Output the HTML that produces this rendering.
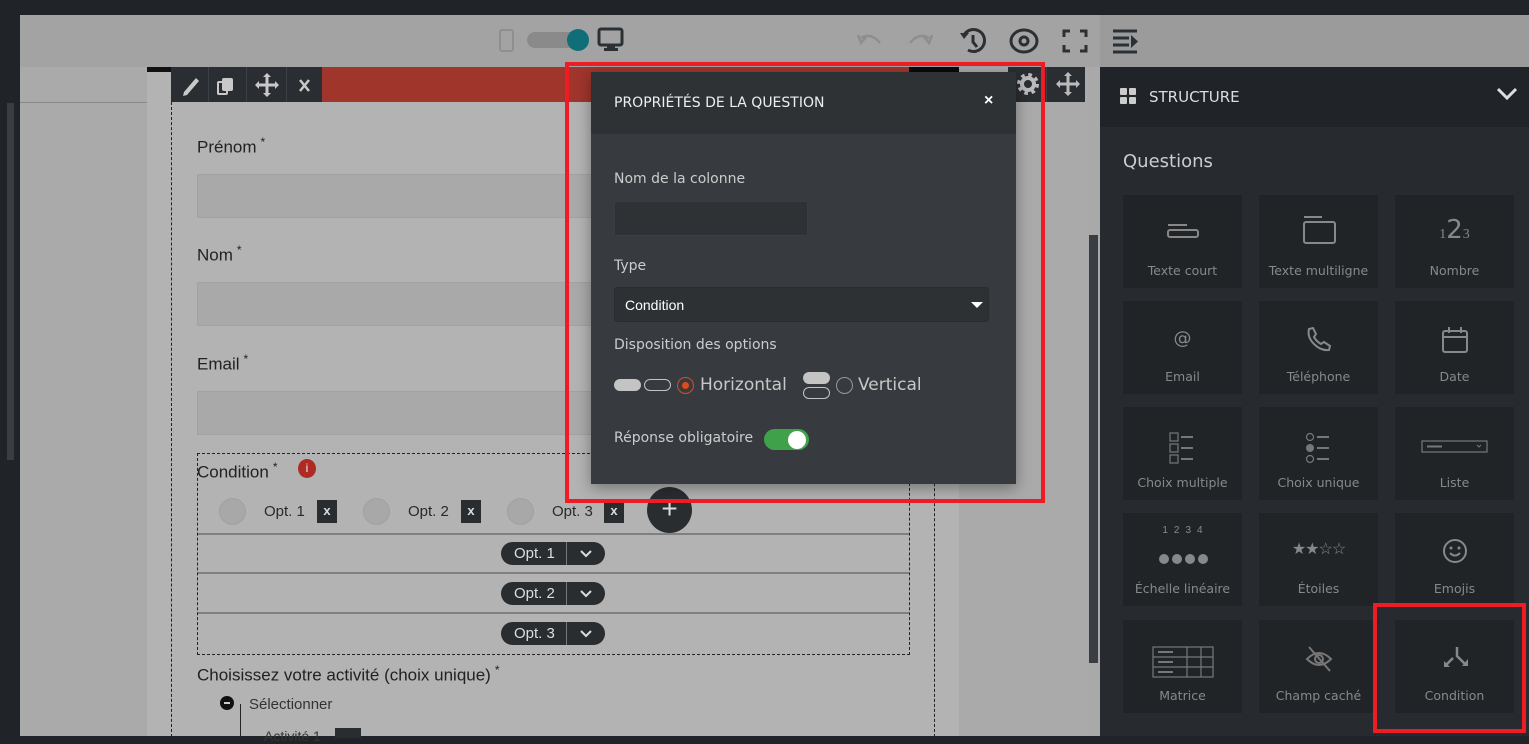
<!DOCTYPE html>
<html><head><meta charset="utf-8"><style>
*{box-sizing:border-box;margin:0;padding:0}
body{width:1529px;height:736px;overflow:hidden;background:#202428;font-family:"Liberation Sans",sans-serif;position:relative}
.a{position:absolute}
.sans{font-family:"DejaVu Sans","Liberation Sans",sans-serif}
.tile{position:absolute;width:119px;height:93px;background:#212427;color:#8a8d90;font-size:13px;text-align:center}
.tile span{position:absolute;left:0;right:0;bottom:10px;font-family:"DejaVu Sans",sans-serif;font-size:12.5px;color:#86898c}
.tile svg{position:absolute;left:50%;top:24px;transform:translateX(-50%)}
.inp{position:absolute;left:197px;width:400px;height:44px;background:#a9a9a9;border:1px solid #a2a2a2}
.lbl{position:absolute;left:197px;font-size:17px;color:#222}
.lbl sup{font-size:12px;margin-left:4px}
.pill{position:absolute;left:501px;width:104px;height:23px;background:#2a2d30;border-radius:12px;color:#ddd;font-size:15px;line-height:23px}
.circ{position:absolute;width:27px;height:27px;border-radius:50%;background:#a8a8a8;border:1px solid #a0a0a0;top:498px}
.xb{position:absolute;width:20px;height:23px;background:#2a2d30;color:#ddd;font-weight:bold;font-size:13px;text-align:center;line-height:22px;top:500px}
.ot{position:absolute;top:503px;font-size:15px;color:#2a2a2a}
</style></head><body>
<div class="a" style="left:0;top:15px;width:20px;height:721px;background:#202428"></div>
<div class="a" style="left:7px;top:103px;width:7px;height:357px;background:#3a3e42"></div>
<div class="a" style="left:20px;top:15px;width:1080px;height:52px;background:#a3a3a3"></div>
<div class="a" style="left:1100px;top:15px;width:429px;height:52px;background:#9b9b9b"></div>
<div class="a" style="left:499px;top:29px;width:15px;height:23px;border:2px solid #8f8f8f;border-radius:3px"></div>
<div class="a" style="left:527px;top:32px;width:50px;height:16px;background:#8a8a8a;border-radius:8px"></div>
<div class="a" style="left:567px;top:29px;width:22px;height:22px;background:#0f6e78;border-radius:50%"></div>
<svg class="a" style="left:597px;top:27px" width="28" height="26"><rect x="2" y="2" width="23" height="16" rx="2" fill="none" stroke="#2b3035" stroke-width="3"/><rect x="10" y="18" width="8" height="4" fill="#2b3035"/><rect x="7" y="21" width="14" height="3" fill="#2b3035"/></svg>
<svg class="a" style="left:855px;top:30px" width="30" height="20"><path d="M6 8 Q16 2 25 13" fill="none" stroke="#8e8e8e" stroke-width="2.5"/><path d="M3 5 L6 13 L11 7" fill="none" stroke="#8e8e8e" stroke-width="2.5"/></svg>
<svg class="a" style="left:905px;top:30px" width="30" height="20"><path d="M24 8 Q14 2 5 13" fill="none" stroke="#8e8e8e" stroke-width="2.5"/><path d="M27 5 L24 13 L19 7" fill="none" stroke="#8e8e8e" stroke-width="2.5"/></svg>
<svg class="a" style="left:958px;top:27px" width="30" height="28"><path d="M6 8 A11 11 0 1 1 10 23" fill="none" stroke="#2b3035" stroke-width="3"/><path d="M2 6 L6 12 L11 6" fill="#2b3035"/><path d="M15 8 L15 15 L19 20" fill="none" stroke="#2b3035" stroke-width="3"/></svg>
<svg class="a" style="left:1008px;top:28px" width="32" height="26"><ellipse cx="16" cy="13" rx="13" ry="11" fill="none" stroke="#2b3035" stroke-width="3"/><circle cx="16" cy="13" r="4" fill="none" stroke="#2b3035" stroke-width="3"/></svg>
<svg class="a" style="left:1062px;top:29px" width="26" height="24"><path d="M2 8V2H8M18 2H24V8M24 16V22H18M8 22H2V16" fill="none" stroke="#2b3035" stroke-width="3"/></svg>
<svg class="a" style="left:1111px;top:28px" width="30" height="26"><path d="M2 3H26M2 10H18M2 17H18M2 24H26" stroke="#2b3035" stroke-width="3"/><path d="M20 7 L27 13.5 L20 20Z" fill="#2b3035"/></svg>
<div class="a" style="left:20px;top:67px;width:1080px;height:669px;background:#aaaaaa"></div>
<div class="a" style="left:20px;top:102px;width:127px;height:1px;background:#888"></div>
<div class="a" style="left:147px;top:67px;width:812px;height:669px;background:#b3b3b3"></div>
<div class="a" style="left:1088px;top:67px;width:12px;height:669px;background:#a9a9a9"></div>
<div class="a" style="left:1089px;top:235px;width:9px;height:428px;background:#3a3e42"></div>
<div class="a" style="left:147px;top:67px;width:25px;height:5px;background:#111"></div>
<div class="a" style="left:171px;top:67px;width:151px;height:35px;background:#2a2d31"></div>
<svg class="a" style="left:180px;top:72px" width="140" height="26"><path d="M4 20 L16 6 L19 9 L7 23 L3 24Z" fill="#c9c9c9"/><rect x="42" y="6" width="11" height="13" rx="2" fill="#c9c9c9"/><rect x="38" y="10" width="9" height="12" rx="1" fill="none" stroke="#c9c9c9" stroke-width="2"/><path d="M87 3v20M77 13h20" stroke="#c9c9c9" stroke-width="3"/><path d="M87 1l-4 4h8zM87 25l-4-4h8zM75 13l4-4v8zM99 13l-4-4v8z" fill="#c9c9c9"/><path d="M120 8l9 11M129 8l-9 11" stroke="#c9c9c9" stroke-width="2.5"/></svg>
<div class="a" style="left:208px;top:67px;width:1px;height:35px;background:#3d4145"></div>
<div class="a" style="left:246px;top:67px;width:1px;height:35px;background:#3d4145"></div>
<div class="a" style="left:286px;top:67px;width:1px;height:35px;background:#3d4145"></div>
<div class="a" style="left:322px;top:67px;width:587px;height:35px;background:#a0352c"></div>
<div class="a" style="left:909px;top:67px;width:50px;height:5px;background:#0a0a0a"></div>
<div class="a" style="left:1008px;top:67px;width:77px;height:35px;background:#2a2d31"></div>
<div class="a" style="left:1046px;top:67px;width:1px;height:35px;background:#3d4145"></div>
<svg class="a" style="left:1015px;top:72px" width="26" height="24"><circle cx="13" cy="12" r="9" fill="none" stroke="#bbb" stroke-width="4" stroke-dasharray="3.5 3.57"/><circle cx="13" cy="12" r="6" fill="none" stroke="#bbb" stroke-width="4"/><circle cx="13" cy="12" r="2.5" fill="#2a2d31"/></svg>
<svg class="a" style="left:1055px;top:71px" width="26" height="26"><path d="M13 3v20M3 13h20" stroke="#bbb" stroke-width="3"/><path d="M13 1l-4 4h8zM13 25l-4-4h8zM1 13l4-4v8zM25 13l-4-4v8z" fill="#bbb"/></svg>
<div class="a" style="left:171px;top:102px;width:764px;height:640px;border:1px dashed #222;border-top:none"></div>
<div class="lbl" style="top:135px">Prénom<sup>*</sup></div>
<div class="inp" style="top:174px"></div>
<div class="lbl" style="top:243px">Nom<sup>*</sup></div>
<div class="inp" style="top:282px"></div>
<div class="lbl" style="top:352px">Email<sup>*</sup></div>
<div class="inp" style="top:391px"></div>
<div class="a" style="left:197px;top:453px;width:713px;height:202px;border:1px dashed #222"></div>
<div class="lbl" style="top:460px">Condition<sup>*</sup></div>
<div class="a" style="left:298px;top:459px;width:18px;height:19px;border-radius:50%;background:#b02a25;color:#eee;font-size:12px;text-align:center;line-height:19px">i</div>
<div class="circ" style="left:219px"></div><div class="ot" style="left:264px">Opt. 1</div><div class="xb" style="left:317px">x</div>
<div class="circ" style="left:363px"></div><div class="ot" style="left:408px">Opt. 2</div><div class="xb" style="left:461px">x</div>
<div class="circ" style="left:507px"></div><div class="ot" style="left:552px">Opt. 3</div><div class="xb" style="left:604px">x</div>
<div class="a" style="left:647px;top:487px;width:45px;height:46px;border-radius:50%;background:#2a2d30;color:#ddd;font-size:28px;text-align:center;line-height:44px">+</div>
<div class="a" style="left:198px;top:533px;width:711px;height:2px;background:#808080"></div>
<div class="a" style="left:198px;top:572px;width:711px;height:2px;background:#808080"></div>
<div class="a" style="left:198px;top:612px;width:711px;height:2px;background:#808080"></div>
<div class="pill" style="top:542px"><span style="margin-left:13px">Opt. 1</span><span class="a" style="left:65px;top:0;width:1px;height:23px;background:#777"></span><svg class="a" style="left:79px;top:8px" width="12" height="8"><path d="M1 1L6 6L11 1" fill="none" stroke="#ddd" stroke-width="2"/></svg></div>
<div class="pill" style="top:582px"><span style="margin-left:13px">Opt. 2</span><span class="a" style="left:65px;top:0;width:1px;height:23px;background:#777"></span><svg class="a" style="left:79px;top:8px" width="12" height="8"><path d="M1 1L6 6L11 1" fill="none" stroke="#ddd" stroke-width="2"/></svg></div>
<div class="pill" style="top:622px"><span style="margin-left:13px">Opt. 3</span><span class="a" style="left:65px;top:0;width:1px;height:23px;background:#777"></span><svg class="a" style="left:79px;top:8px" width="12" height="8"><path d="M1 1L6 6L11 1" fill="none" stroke="#ddd" stroke-width="2"/></svg></div>
<div class="lbl" style="top:663px">Choisissez votre activité (choix unique)<sup>*</sup></div>
<div class="a" style="left:220px;top:696px;width:14px;height:14px;border-radius:50%;background:#111"></div>
<div class="a" style="left:224px;top:702px;width:6px;height:2px;background:#ccc"></div>
<div class="a" style="left:240px;top:704px;width:1px;height:32px;background:#222"></div>
<div class="a" style="left:249px;top:696px;font-size:15px;color:#333">Sélectionner</div>
<div class="a" style="left:264px;top:728px;font-size:14px;color:#333">Activité 1</div>
<div class="a" style="left:335px;top:728px;width:26px;height:10px;background:#2a2d30"></div>
<div class="a" style="left:591px;top:72px;width:425px;height:412px;background:#373b3f;box-shadow:0 4px 14px rgba(0,0,0,.35)"></div>
<div class="a" style="left:591px;top:72px;width:425px;height:62px;background:#2e3235"></div>
<div class="a sans" style="left:614px;top:95px;color:#eee;font-size:14px">PROPRIÉTÉS DE LA QUESTION</div>
<div class="a" style="left:984px;top:92px;color:#fff;font-size:16px;font-weight:bold">×</div>
<div class="a sans" style="left:614px;top:171px;color:#ccc;font-size:14px">Nom de la colonne</div>
<div class="a" style="left:614px;top:201px;width:194px;height:35px;background:#2e3235;border:1px solid #3a3e42;border-radius:2px"></div>
<div class="a sans" style="left:614px;top:258px;color:#ccc;font-size:14px">Type</div>
<div class="a" style="left:614px;top:287px;width:375px;height:35px;background:#2d3134;border:1px solid #2a2d30;border-radius:3px"></div>
<div class="a" style="left:625px;top:297px;color:#fff;font-size:14px">Condition</div>
<div class="a" style="left:971px;top:302px;border-left:6px solid transparent;border-right:6px solid transparent;border-top:6px solid #fff"></div>
<div class="a sans" style="left:614px;top:337px;color:#ccc;font-size:14px">Disposition des options</div>
<div class="a" style="left:614px;top:379px;width:27px;height:12px;background:#c4c4c4;border-radius:6px"></div>
<div class="a" style="left:644px;top:379px;width:27px;height:12px;border:1px solid #c4c4c4;border-radius:6px"></div>
<div class="a" style="left:677px;top:377px;width:17px;height:17px;border:1.5px solid #e0491a;border-radius:50%"></div>
<div class="a" style="left:682px;top:382px;width:7px;height:7px;background:#e0491a;border-radius:50%"></div>
<div class="a sans" style="left:700px;top:375px;color:#c8c8c8;font-size:17px">Horizontal</div>
<div class="a" style="left:803px;top:372px;width:27px;height:12px;background:#c4c4c4;border-radius:6px"></div>
<div class="a" style="left:803px;top:387px;width:27px;height:12px;border:1px solid #c4c4c4;border-radius:6px"></div>
<div class="a" style="left:836px;top:377px;width:17px;height:17px;border:1.5px solid #999;border-radius:50%"></div>
<div class="a sans" style="left:858px;top:375px;color:#c8c8c8;font-size:17px">Vertical</div>
<div class="a sans" style="left:614px;top:430px;color:#ccc;font-size:14px">Réponse obligatoire</div>
<div class="a" style="left:764px;top:429px;width:45px;height:21px;background:#3fa14a;border-radius:11px"></div>
<div class="a" style="left:788px;top:431px;width:18px;height:18px;background:#fff;border-radius:50%"></div>
<div class="a" style="left:565px;top:62px;width:480px;height:441px;border:4px solid #ee1c25"></div>
<div class="a" style="left:1100px;top:67px;width:429px;height:60px;background:#202428"></div>
<div class="a" style="left:1100px;top:127px;width:429px;height:609px;background:#272b2f"></div>
<svg class="a" style="left:1120px;top:88px" width="16" height="17"><rect x="0" y="0" width="7" height="7" rx="1" fill="#ccc"/><rect x="9" y="0" width="7" height="7" rx="1" fill="#ccc"/><rect x="0" y="9" width="7" height="7" rx="1" fill="#ccc"/><rect x="9" y="9" width="7" height="7" rx="1" fill="#ccc"/></svg>
<div class="a sans" style="left:1149px;top:88px;color:#ddd;font-size:15px">STRUCTURE</div>
<svg class="a" style="left:1496px;top:87px" width="22" height="14"><path d="M2 2 L11 11 L20 2" fill="none" stroke="#ddd" stroke-width="3"/></svg>
<div class="a sans" style="left:1123px;top:151px;color:#ccc;font-size:18px">Questions</div>
<div class="tile" style="left:1123px;top:195px"><svg width="36" height="24"><path d="M3 6H22" stroke="#888" stroke-width="2"/><rect x="3" y="11" width="30" height="7" rx="2" fill="none" stroke="#888" stroke-width="2"/></svg><span>Texte court</span></div>
<div class="tile" style="left:1259px;top:195px"><svg width="36" height="30" style="top:20px"><path d="M3 2H21" stroke="#888" stroke-width="2"/><rect x="3" y="7" width="31" height="21" rx="2" fill="none" stroke="#888" stroke-width="2"/></svg><span>Texte multiligne</span></div>
<div class="tile" style="left:1395px;top:195px"><div class="a" style="left:0;right:0;top:20px;font-family:'Liberation Serif',serif;color:#888;font-size:14px">1<span style="position:static;font-size:26px;color:#888">2</span>3</div><span>Nombre</span></div>
<div class="tile" style="left:1123px;top:301px"><div class="a sans" style="left:0;right:0;top:27px;color:#888;font-size:18px">@</div><span>Email</span></div>
<div class="tile" style="left:1259px;top:301px"><svg width="30" height="30"><path d="M5 4 Q3 12 10 19 Q17 26 25 25 L26 21 L20 17 L17 19 Q12 16 10 12 L12 9 L9 3Z" fill="none" stroke="#888" stroke-width="2"/></svg><span>Téléphone</span></div>
<div class="tile" style="left:1395px;top:301px"><svg width="28" height="30"><rect x="2" y="6" width="24" height="21" rx="2" fill="none" stroke="#888" stroke-width="2"/><path d="M2 12H26M8 2V8M20 2V8" stroke="#888" stroke-width="2"/></svg><span>Date</span></div>
<div class="tile" style="left:1123px;top:407px"><svg width="30" height="34"><rect x="2" y="2" width="8" height="8" fill="none" stroke="#777" stroke-width="1.2"/><rect x="2" y="13" width="8" height="8" fill="none" stroke="#777" stroke-width="1.2"/><rect x="2" y="24" width="8" height="8" fill="none" stroke="#777" stroke-width="1.2"/><path d="M13 6H25M13 17H25M13 28H25" stroke="#777" stroke-width="2"/></svg><span>Choix multiple</span></div>
<div class="tile" style="left:1259px;top:407px"><svg width="30" height="34"><circle cx="6" cy="6" r="3.5" fill="none" stroke="#777" stroke-width="1.2"/><circle cx="6" cy="17" r="4" fill="#777"/><circle cx="6" cy="28" r="3.5" fill="none" stroke="#777" stroke-width="1.2"/><path d="M13 6H25M13 17H25M13 28H25" stroke="#777" stroke-width="2"/></svg><span>Choix unique</span></div>
<div class="tile" style="left:1395px;top:407px"><svg width="68" height="34"><rect x="1" y="10" width="65" height="11" fill="none" stroke="#777" stroke-width="1.2"/><path d="M6 15.5H21" stroke="#777" stroke-width="2"/><path d="M56 14 L58 16 L60 14" fill="none" stroke="#777"/></svg><span>Liste</span></div>
<div class="tile" style="left:1123px;top:513px"><div class="a" style="left:0;right:0;top:12px;color:#888;font-size:10px;letter-spacing:6px;padding-left:6px">1234</div><svg width="50" height="20" style="top:36px"><circle cx="6" cy="10" r="5" fill="#888"/><circle cx="19" cy="10" r="5" fill="#888"/><circle cx="32" cy="10" r="5" fill="#888"/><circle cx="45" cy="10" r="5" fill="#888"/></svg><span>Échelle linéaire</span></div>
<div class="tile" style="left:1259px;top:513px"><div class="a" style="left:0;right:0;top:26px;color:#888;font-size:16px;letter-spacing:-1px">★★☆☆</div><span>Étoiles</span></div>
<div class="tile" style="left:1395px;top:513px"><svg width="28" height="30"><circle cx="14" cy="14" r="11" fill="none" stroke="#888" stroke-width="2"/><circle cx="10" cy="11" r="1.5" fill="#888"/><circle cx="18" cy="11" r="1.5" fill="#888"/><path d="M9 16 Q14 21 19 16" fill="none" stroke="#888" stroke-width="2"/></svg><span>Emojis</span></div>
<div class="tile" style="left:1123px;top:620px"><svg width="62" height="34"><rect x="1" y="3" width="60" height="30" fill="none" stroke="#777" stroke-width="1.2"/><path d="M1 13H61M1 23H61M35 3V33M49 3V33" stroke="#777" stroke-width="1.2"/><path d="M6 8H21M6 18H21M6 28H21" stroke="#777" stroke-width="2"/></svg><span>Matrice</span></div>
<div class="tile" style="left:1259px;top:620px"><svg width="30" height="30"><path d="M3 15 Q15 3 27 15 Q15 27 3 15Z" fill="none" stroke="#777" stroke-width="2"/><circle cx="15" cy="15" r="4" fill="none" stroke="#777" stroke-width="2"/><path d="M5 3 L26 27" stroke="#777" stroke-width="2"/></svg><span>Champ caché</span></div>
<div class="tile" style="left:1395px;top:620px"><svg width="30" height="30"><path d="M17 3V12L26 21M13 14L5 22" fill="none" stroke="#888" stroke-width="2.5"/><path d="M22 22H28V15Z M4 17V23H10Z" fill="#888"/></svg><span>Condition</span></div>
<div class="a" style="left:1373px;top:603px;width:153px;height:130px;border:4px solid #ee1c25"></div>
</body></html>
